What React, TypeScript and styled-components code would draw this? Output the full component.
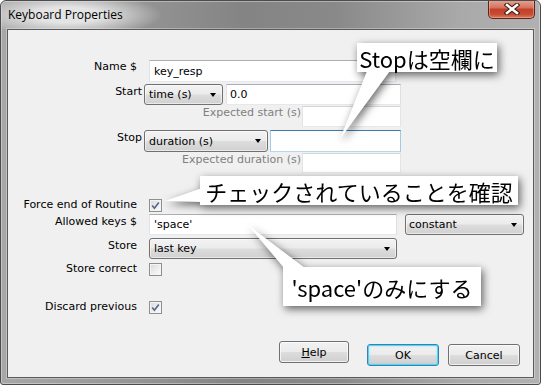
import React from 'react';
import styled, { createGlobalStyle } from 'styled-components';

const GlobalStyle = createGlobalStyle`
  html, body {
    margin: 0;
    padding: 0;
    background: #ffffff;
  }
  body {
    font-family: "DejaVu Sans", "Liberation Sans", sans-serif;
    font-size: 11px;
    color: #000;
  }
`;

type Note = {
  text: string;
  x: number;
  y: number;
  w: number;
  h: number;
  size: number;
  tail: string;
};

const notes: Note[] = [
  { text: 'Stopは空欄に', x: 357, y: 43, w: 140, h: 29, size: 22, tail: '367,71 390,71 340,139' },
  { text: 'チェックされていることを確認', x: 200, y: 176, w: 318, h: 29, size: 22, tail: '202,188 202,202 165,201' },
  { text: "'space'のみにする", x: 283, y: 267, w: 198, h: 39, size: 22, tail: '284,268 305,268 248,225' },
];

function App() {
  return (
    <>
      <GlobalStyle />
      <Window>
        <TitleBar>
          <Title>Keyboard Properties</Title>
          <CloseButton>
            <svg width="16" height="12" viewBox="0 0 16 12">
              <path d="M3 2 L13 10 M13 2 L3 10" stroke="#3a1a12" strokeWidth="4.6" strokeLinecap="square" />
              <path d="M3 2 L13 10 M13 2 L3 10" stroke="#ffffff" strokeWidth="2.6" strokeLinecap="square" />
            </svg>
          </CloseButton>
        </TitleBar>
        <Body>
          <Client>
            <Row $mt={30} $gap={12}>
              <Label $w={129} $pt={0}>Name $</Label>
              <TextField $w={247} $h={22}>key_resp</TextField>
            </Row>
            <Row $mt={2} $gap={2}>
              <Label $w={134}>Start</Label>
              <Select $w={79} $h={21}>
                time (s)
                <Caret />
              </Select>
              <TextField $w={175} $h={21} $ml={1} $pl={3}>0.0</TextField>
            </Row>
            <Row $mt={1} $gap={1}>
              <Label $w={293} $pt={0} $muted>Expected start (s)</Label>
              <TextField $w={99} $h={21} $variant="faint" />
            </Row>
            <Row $mt={3} $gap={2}>
              <Label $w={134}>Stop</Label>
              <Select $w={124} $h={22}>
                duration (s)
                <Caret />
              </Select>
              <TextField $w={131} $h={22} $variant="focus" />
            </Row>
            <Row $mt={1} $gap={1}>
              <Label $w={293} $pt={0} $muted>Expected duration (s)</Label>
              <TextField $w={99} $h={20} $variant="faint" />
            </Row>
            <Row $mt={25} $gap={12} $center>
              <Label $w={129} $pt={0}>Force end of Routine</Label>
              <Checkbox checked />
            </Row>
            <Row $mt={2} $gap={8}>
              <Label $w={129} $mr={4}>Allowed keys $</Label>
              <TextField $w={248} $h={21}>'space'</TextField>
              <Select $w={119} $h={21} $pl={3}>
                constant
                <Caret />
              </Select>
            </Row>
            <Row $mt={3} $gap={12}>
              <Label $w={129}>Store</Label>
              <Select $w={248} $h={21}>
                last key
                <Caret />
              </Select>
            </Row>
            <Row $mt={3} $gap={12} $center>
              <Label $w={129} $pt={0}>Store correct</Label>
              <Checkbox />
            </Row>
            <Row $mt={24} $gap={12} $center>
              <Label $w={129} $pt={0}>Discard previous</Label>
              <Checkbox checked />
            </Row>
            <ButtonBar>
              <Button>
                <u>H</u>elp
              </Button>
              <Button $primary $ml={18} $mt={3}>OK</Button>
              <Button $ml={9} $mt={3}>Cancel</Button>
            </ButtonBar>
          </Client>
        </Body>
        {notes.map((n) => (
          <CalloutLayer key={n.text}>
            <svg width="541" height="385" viewBox="0 0 541 385">
              <polygon points={n.tail} fill="#ffffff" />
            </svg>
            <CalloutBox style={{ left: n.x, top: n.y, width: n.w, height: n.h, fontSize: n.size }}>
              {n.text}
            </CalloutBox>
          </CalloutLayer>
        ))}
      </Window>
    </>
  );
}

function Checkbox({ checked = false }: { checked?: boolean }) {
  return (
    <CheckBox>
      {checked && (
        <svg width="11" height="11" viewBox="0 0 11 11">
          <path d="M2.2 5.6 L4.4 8.2 L8.8 2.4" fill="none" stroke="#52668e" strokeWidth="1.6" />
        </svg>
      )}
    </CheckBox>
  );
}

export default App;

const Window = styled.div`
  position: relative;
  width: 541px;
  height: 385px;
  box-sizing: border-box;
  border: 1px solid #4c4c4c;
  border-radius: 6px 6px 3px 3px;
  background: linear-gradient(
    to right,
    #a7a7a7 0%,
    #999999 20%,
    #848484 45%,
    #898989 62%,
    #a9a9a9 85%,
    #b1b1b1 100%
  );
  box-shadow: inset 0 0 0 1px rgba(255, 255, 255, 0.35);
  display: flex;
  flex-direction: column;
  overflow: hidden;
`;

const TitleBar = styled.div`
  height: 28px;
  flex-shrink: 0;
  display: flex;
  align-items: flex-start;
  justify-content: space-between;
  padding: 0 5px 0 7px;
  background: radial-gradient(
    ellipse 95px 22px at 66px 14px,
    rgba(228, 228, 228, 1) 35%,
    rgba(228, 228, 228, 0) 100%
  );
`;

const Title = styled.div`
  font-family: "Open Sans", "Noto Sans", sans-serif;
  font-size: 12px;
  line-height: 28px;
  color: #000;
`;

const CloseButton = styled.div`
  width: 47px;
  height: 19px;
  margin-top: -1px;
  box-sizing: border-box;
  border: 1px solid #5b261c;
  border-top: none;
  border-radius: 0 0 5px 5px;
  background: linear-gradient(
    to bottom,
    #e6a595 0%,
    #d6735f 42%,
    #c2412a 52%,
    #c64a31 78%,
    #db7a5d 100%
  );
  box-shadow: inset 0 0 0 1px rgba(255, 190, 175, 0.45);
  display: flex;
  align-items: center;
  justify-content: center;
`;

const Body = styled.div`
  flex: 1;
  display: flex;
  padding: 0 6px 6px;
`;

const Client = styled.div`
  flex: 1;
  display: flex;
  flex-direction: column;
  border: 1px solid #5a5a5a;
  background: #f0f0f0;
  box-shadow: 0 0 0 1px rgba(255, 255, 255, 0.3);
`;

const Row = styled.div<{ $mt: number; $gap: number; $center?: boolean }>`
  display: flex;
  align-items: ${(p) => (p.$center ? 'center' : 'flex-start')};
  gap: ${(p) => p.$gap}px;
  margin-top: ${(p) => p.$mt}px;
`;

const Label = styled.div<{ $w: number; $pt?: number; $mr?: number; $muted?: boolean }>`
  width: ${(p) => p.$w}px;
  flex-shrink: 0;
  text-align: right;
  line-height: 14px;
  padding-top: ${(p) => p.$pt ?? 1}px;
  margin-right: ${(p) => p.$mr ?? 0}px;
  white-space: nowrap;
  color: ${(p) => (p.$muted ? '#7f7f7f' : '#000')};
`;

const TextField = styled.div<{
  $w: number;
  $h: number;
  $ml?: number;
  $pl?: number;
  $variant?: 'focus' | 'faint';
}>`
  width: ${(p) => p.$w}px;
  height: ${(p) => p.$h}px;
  margin-left: ${(p) => p.$ml ?? 0}px;
  padding-left: ${(p) => p.$pl ?? 4}px;
  box-sizing: border-box;
  flex-shrink: 0;
  display: flex;
  align-items: center;
  background: #ffffff;
  border: 1px solid;
  border-color: ${(p) =>
    p.$variant === 'focus'
      ? '#3d7bad #a4c9e3 #b7d9ed #a4c9e3'
      : p.$variant === 'faint'
      ? '#d6d6d6 #e4e4e4 #e8e8e8 #e4e4e4'
      : '#abadb3 #dbdfe6 #e3e9ef #e2e3ea'};
`;

const Select = styled.div<{ $w: number; $h: number; $pl?: number }>`
  width: ${(p) => p.$w}px;
  height: ${(p) => p.$h}px;
  box-sizing: border-box;
  flex-shrink: 0;
  display: flex;
  align-items: center;
  justify-content: space-between;
  padding: 0 6px 0 ${(p) => p.$pl ?? 4}px;
  border: 1px solid #707070;
  border-radius: 3px;
  background: linear-gradient(to bottom, #f3f3f3 0%, #ebebeb 48%, #dddddd 52%, #d0d0d0 100%);
  box-shadow: inset 0 0 0 1px rgba(255, 255, 255, 0.55);
  white-space: nowrap;
`;

const Caret = styled.span`
  width: 0;
  height: 0;
  border-left: 3.5px solid transparent;
  border-right: 3.5px solid transparent;
  border-top: 4px solid #000;
`;

const CheckBox = styled.div`
  width: 13px;
  height: 13px;
  box-sizing: border-box;
  flex-shrink: 0;
  border: 1px solid #8e8f8f;
  background: linear-gradient(135deg, #d9d9d9 0%, #f0f0f0 60%, #fbfbfb 100%);
  box-shadow: inset 0 0 0 1px #f4f4f4;
  display: flex;
  align-items: center;
  justify-content: center;
`;

const ButtonBar = styled.div`
  display: flex;
  align-items: flex-start;
  justify-content: flex-end;
  margin-top: 27px;
  padding-right: 13px;
`;

const Button = styled.div<{ $primary?: boolean; $ml?: number; $mt?: number }>`
  width: ${(p) => (p.$primary ? 72 : p.$ml ? 72 : 70)}px;
  height: 22px;
  box-sizing: border-box;
  margin-left: ${(p) => p.$ml ?? 0}px;
  margin-top: ${(p) => p.$mt ?? 0}px;
  display: flex;
  align-items: center;
  justify-content: center;
  border: 1px solid ${(p) => (p.$primary ? '#3c7fb1' : '#707070')};
  border-radius: 3px;
  background: linear-gradient(to bottom, #f2f2f2 0%, #ebebeb 48%, #dddddd 52%, #cfcfcf 100%);
  box-shadow: ${(p) =>
    p.$primary ? 'inset 0 0 0 1px #48d8fb, inset 0 0 2px 1px rgba(72, 216, 251, 0.5)' : 'inset 0 0 0 1px rgba(255, 255, 255, 0.7)'};
  color: #000;
`;

const CalloutLayer = styled.div`
  position: absolute;
  left: -1px;
  top: -1px;
  width: 541px;
  height: 385px;
  pointer-events: none;
  filter: drop-shadow(2px 3px 4px rgba(0, 0, 0, 0.6));

  svg {
    position: absolute;
    left: 0;
    top: 0;
  }
`;

const CalloutBox = styled.div`
  position: absolute;
  box-sizing: border-box;
  background: #ffffff;
  display: flex;
  align-items: center;
  justify-content: center;
  font-family: "Noto Sans CJK JP", "Noto Sans", sans-serif;
  line-height: 1;
  color: #000;
  white-space: nowrap;
`;
